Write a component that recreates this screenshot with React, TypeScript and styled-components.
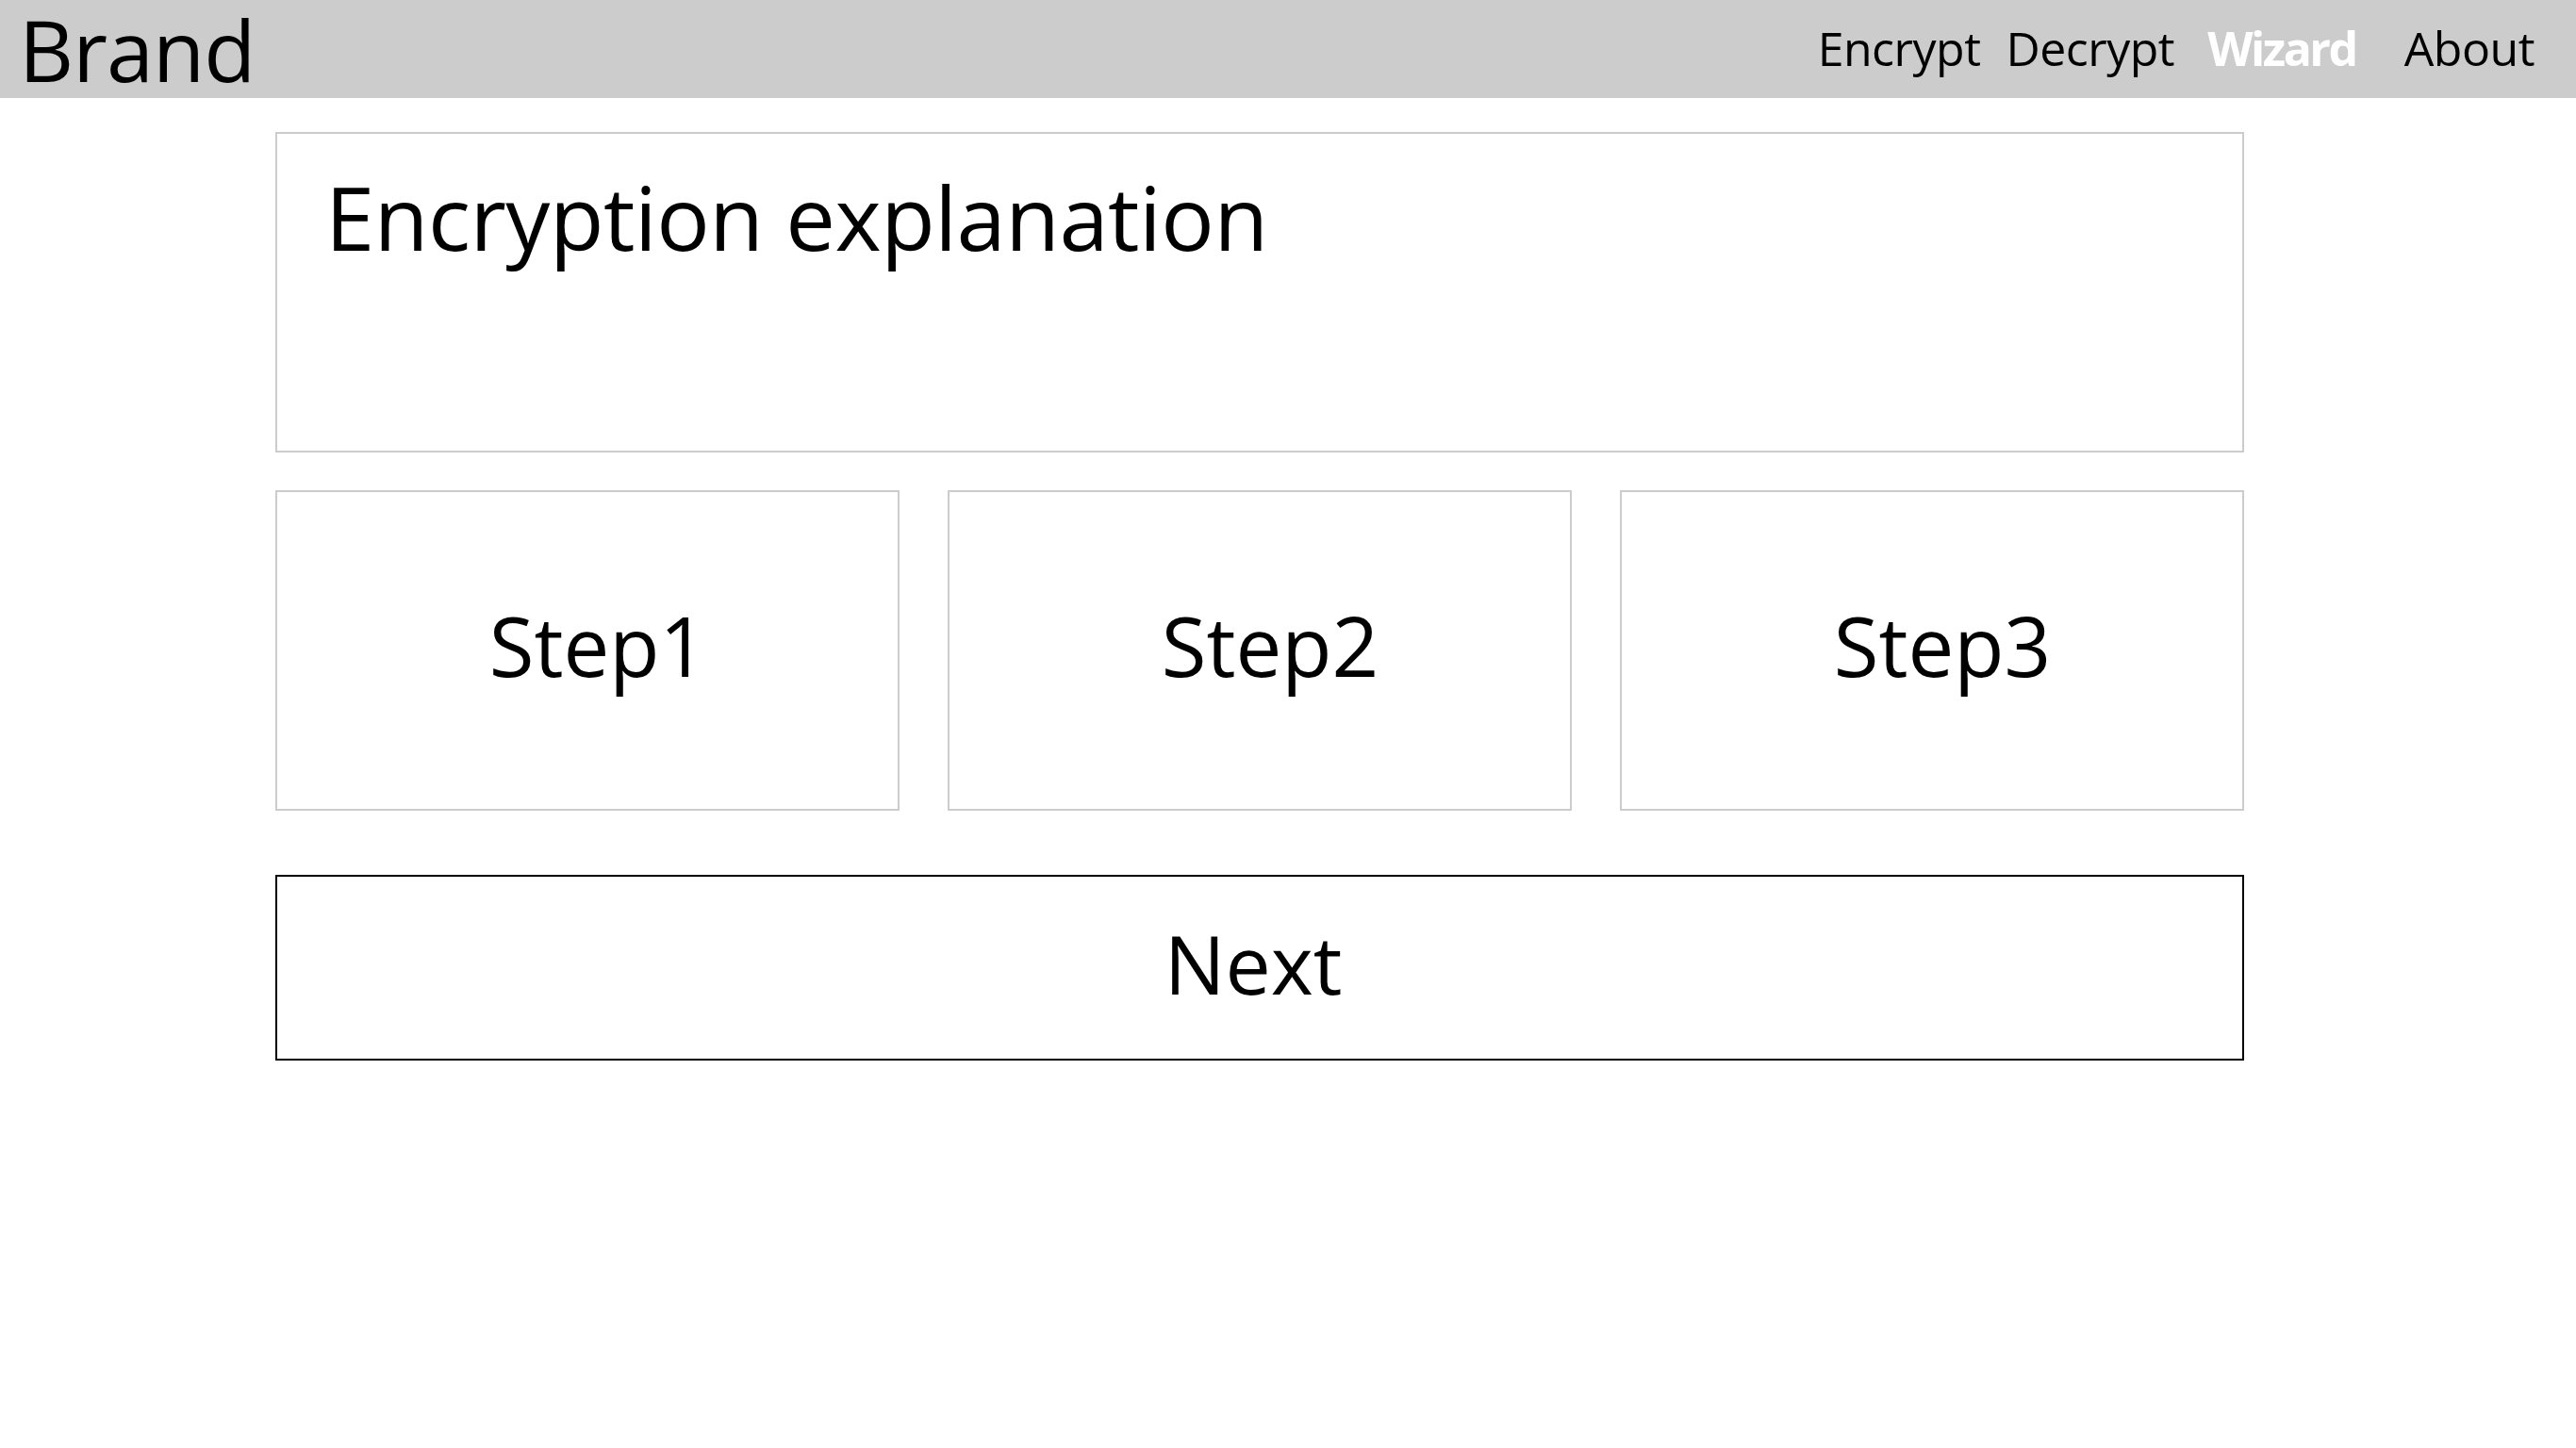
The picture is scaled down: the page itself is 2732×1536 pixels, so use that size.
import styled, { createGlobalStyle } from "styled-components";

const GlobalStyle = createGlobalStyle`
  body {
    margin: 0;
    background: #ffffff;
    font-family: "Open Sans", "Noto Sans", sans-serif;
    color: #000000;
  }
`;

const Header = styled.header`
  height: 104px;
  background: #cccccc;
  display: flex;
  align-items: center;
  justify-content: space-between;
  padding: 0 44px 0 20px;
  box-sizing: border-box;
`;

const Brand = styled.div`
  font-size: 90px;
  line-height: 104px;
  letter-spacing: -1px;
`;

const Nav = styled.nav`
  display: flex;
  align-items: center;
  gap: 27px;
  padding-bottom: 2px;
`;

const NavLink = styled.a<{ $active?: boolean }>`
  font-size: 50px;
  line-height: 1.2;
  letter-spacing: ${(p) => (p.$active ? "-2.5px" : "-0.5px")};
  font-weight: ${(p) => (p.$active ? 700 : 400)};
  color: ${(p) => (p.$active ? "#ffffff" : "#000000")};
  margin: ${(p) => (p.$active ? "0 24px 0 8px" : "0")};
  text-decoration: none;
  cursor: pointer;
`;

const Main = styled.main`
  width: 2088px;
  margin: 36px 0 0 292px;
  display: flex;
  flex-direction: column;
`;

const ExplainCard = styled.section`
  height: 340px;
  box-sizing: border-box;
  border: 2px solid #cccccc;
  padding: 41px 51px;
`;

const Title = styled.h1`
  margin: 0;
  font-size: 94px;
  font-weight: 400;
  line-height: 1;
  letter-spacing: -0.5px;
`;

const StepsRow = styled.div`
  margin-top: 40px;
  display: grid;
  grid-template-columns: repeat(3, 1fr);
  gap: 51px;
`;

const StepCard = styled.div`
  height: 340px;
  box-sizing: border-box;
  border: 2px solid #cccccc;
  display: flex;
  align-items: center;
  justify-content: center;
  padding: 0 0 12px 22px;
  font-size: 87px;
  line-height: 1;
`;

const NextButton = styled.button`
  margin-top: 68px;
  height: 197px;
  width: 100%;
  box-sizing: border-box;
  border: 2px solid #000000;
  background: #ffffff;
  font-family: inherit;
  font-size: 86px;
  line-height: 1;
  color: #000000;
  padding: 0 14px 10px 0;
  cursor: pointer;
`;

const links = ["Encrypt", "Decrypt", "Wizard", "About"];
const steps = ["Step1", "Step2", "Step3"];

export default function App() {
  return (
    <>
      <GlobalStyle />
      <Header>
        <Brand>Brand</Brand>
        <Nav>
          {links.map((l) => (
            <NavLink key={l} $active={l === "Wizard"}>
              {l}
            </NavLink>
          ))}
        </Nav>
      </Header>
      <Main>
        <ExplainCard>
          <Title>Encryption explanation</Title>
        </ExplainCard>
        <StepsRow>
          {steps.map((s) => (
            <StepCard key={s}>{s}</StepCard>
          ))}
        </StepsRow>
        <NextButton>Next</NextButton>
      </Main>
    </>
  );
}
